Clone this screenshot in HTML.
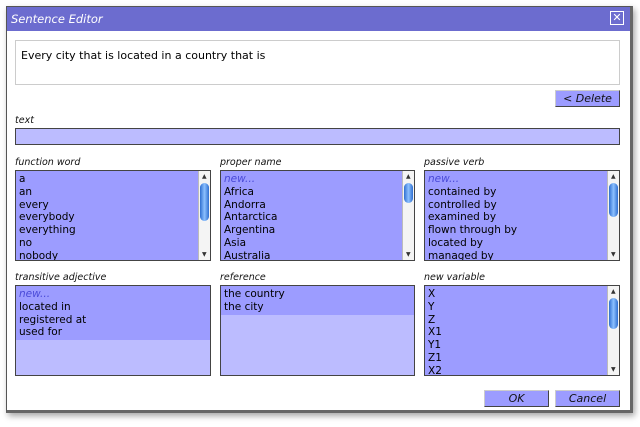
<!DOCTYPE html>
<html><head><style>
*{box-sizing:border-box;margin:0;padding:0}
body{width:640px;height:427px;background:#fff;position:relative;overflow:hidden;font-family:"DejaVu Sans","Liberation Sans",sans-serif;}
.win{position:absolute;left:6px;top:6px;width:627px;height:407px;border:1px solid #555;border-right:3px solid #666;border-bottom:3px solid #666;background:#fff;box-shadow:2px 3px 6px rgba(0,0,0,.35)}
.title{position:absolute;left:0;top:0;right:0;height:24px;background:#6c6ccf;color:#fff;font-style:italic;font-size:11.5px;line-height:24px;padding-left:4px}
.close{position:absolute;right:6px;top:4px;width:14px;height:14px;border:1px solid #fff;color:#fff;font-size:11px;line-height:12px;text-align:center;font-style:normal;font-weight:bold}
.abs{position:absolute}
.sent{left:15px;top:40px;width:605px;height:45px;border:1px solid #ccc;font-size:11px;padding:8px 5px}
.btn{background:#9c9cff;border:1px solid #444;border-top-color:#ccc;border-left-color:#ccc;font-style:italic;font-size:11px;text-align:center;line-height:15px;color:#111}
.lbl{font-size:9.5px;font-style:italic;color:#111}
.inp{left:15px;top:128px;width:605px;height:17px;background:#bcbcff;border:1px solid #444}
.list{border:1px solid #444;background:#bcbcff;font-size:10.5px;overflow:hidden}
.list .it{background:#9c9cff;padding-left:3px;height:12.8px;line-height:12.8px;white-space:nowrap}
.list .it:first-child{height:14.8px;padding-top:2px}
.new{color:#4a4ad8;font-style:italic}
.sb{position:absolute;right:0;top:0;bottom:0;width:12px;background:#f4f4f4;border-left:1px solid #bbb}
.thumb{position:absolute;left:1px;top:12px;width:9px;height:38px;border-radius:5px;background:linear-gradient(90deg,#2f6fd0,#8cc0ff,#2f6fd0)}
.ar{position:absolute;left:3px;font-size:6px;color:#333}
</style></head><body>
<div class="win">
<div class="title">Sentence Editor<div class="close">✕</div></div>
</div>
<div class="abs sent">Every city that is located in a country that is</div>
<div class="abs btn" style="left:555px;top:90px;width:65px;height:17px">&lt; Delete</div>
<div class="abs lbl" style="left:15px;top:115px">text</div>
<div class="abs inp"></div>

<div class="abs lbl" style="left:15px;top:157px">function word</div>
<div class="abs lbl" style="left:220px;top:157px">proper name</div>
<div class="abs lbl" style="left:424px;top:157px">passive verb</div>
<div class="abs list" style="left:15px;top:170px;width:196px;height:91px">
<div class="it">a</div><div class="it">an</div><div class="it">every</div><div class="it">everybody</div><div class="it">everything</div><div class="it">no</div><div class="it">nobody</div>
<div class="sb"><span class="ar" style="top:2px">▲</span><div class="thumb"></div><span class="ar" style="bottom:2px">▼</span></div></div>
<div class="abs list" style="left:220px;top:170px;width:195px;height:91px">
<div class="it new">new...</div><div class="it">Africa</div><div class="it">Andorra</div><div class="it">Antarctica</div><div class="it">Argentina</div><div class="it">Asia</div><div class="it">Australia</div>
<div class="sb"><span class="ar" style="top:2px">▲</span><div class="thumb" style="height:20px"></div><span class="ar" style="bottom:2px">▼</span></div></div>
<div class="abs list" style="left:424px;top:170px;width:196px;height:91px">
<div class="it new">new...</div><div class="it">contained by</div><div class="it">controlled by</div><div class="it">examined by</div><div class="it">flown through by</div><div class="it">located by</div><div class="it">managed by</div>
<div class="sb"><span class="ar" style="top:2px">▲</span><div class="thumb" style="height:34px"></div><span class="ar" style="bottom:2px">▼</span></div></div>

<div class="abs lbl" style="left:15px;top:272px">transitive adjective</div>
<div class="abs lbl" style="left:220px;top:272px">reference</div>
<div class="abs lbl" style="left:424px;top:272px">new variable</div>
<div class="abs list" style="left:15px;top:285px;width:196px;height:91px">
<div class="it new">new...</div><div class="it">located in</div><div class="it">registered at</div><div class="it" style="height:14px">used for</div></div>
<div class="abs list" style="left:220px;top:285px;width:195px;height:91px">
<div class="it">the country</div><div class="it" style="height:14px">the city</div></div>
<div class="abs list" style="left:424px;top:285px;width:196px;height:91px">
<div class="it">X</div><div class="it">Y</div><div class="it">Z</div><div class="it">X1</div><div class="it">Y1</div><div class="it">Z1</div><div class="it">X2</div>
<div class="sb"><span class="ar" style="top:2px">▲</span><div class="thumb" style="height:31px"></div><span class="ar" style="bottom:2px">▼</span></div></div>

<div class="abs btn" style="left:484px;top:390px;width:65px;height:17px">OK</div>
<div class="abs btn" style="left:555px;top:390px;width:65px;height:17px">Cancel</div>
</body></html>
